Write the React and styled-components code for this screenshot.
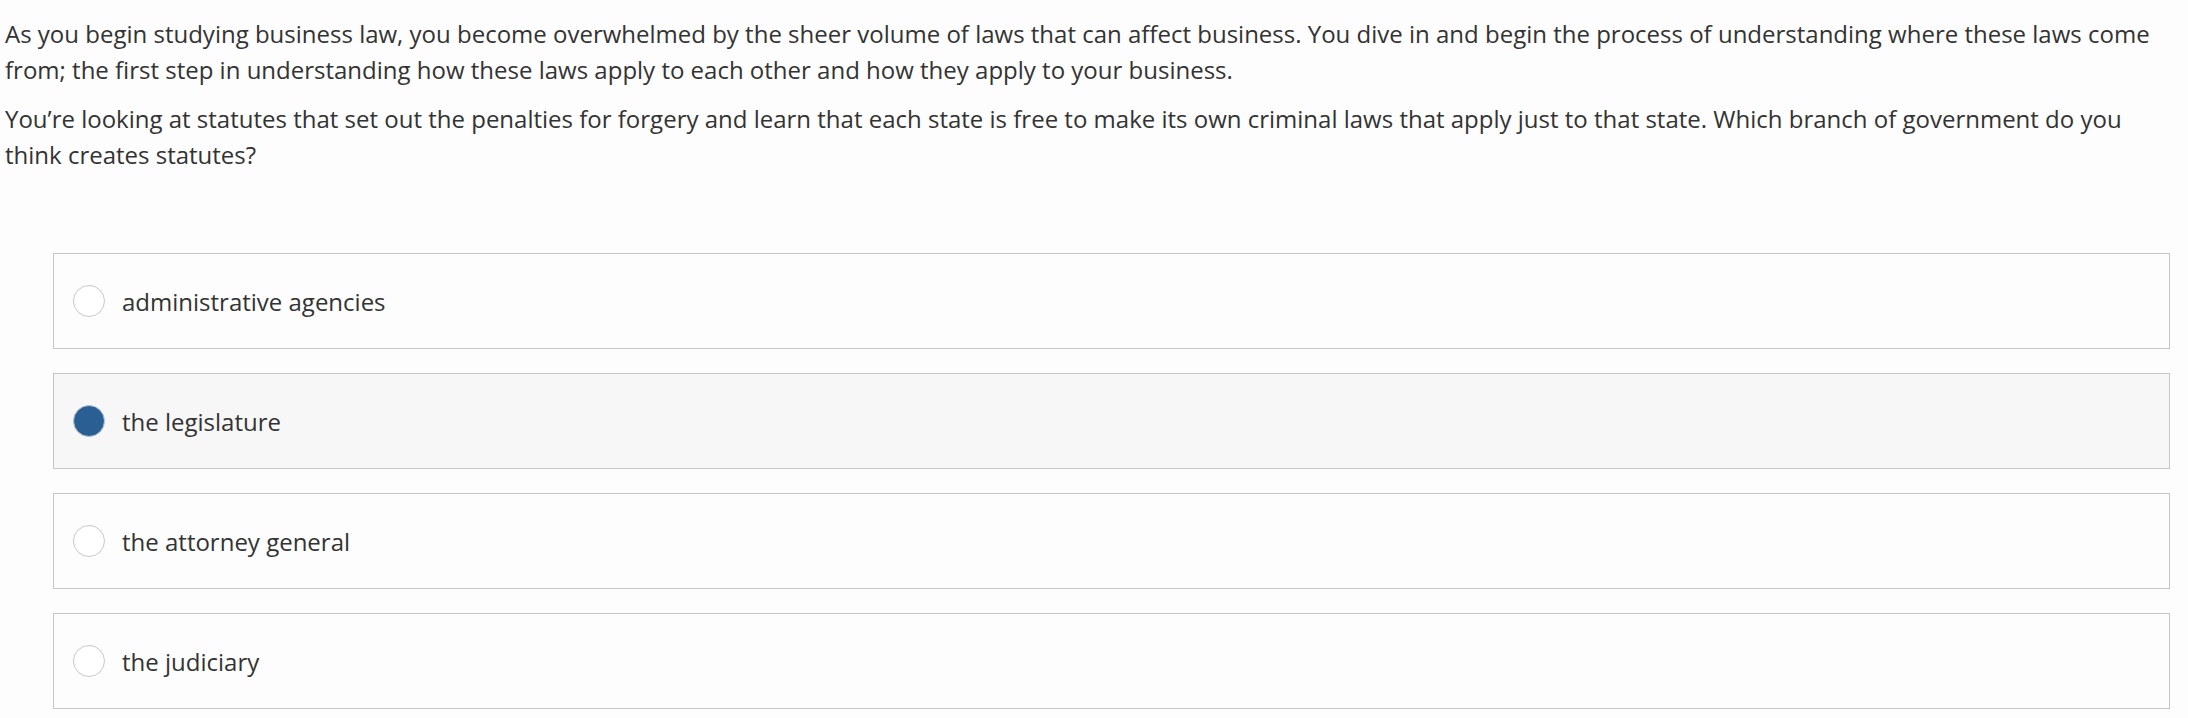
import React, { useState } from "react";
import styled, { createGlobalStyle } from "styled-components";

const Global = createGlobalStyle`
  html, body { margin: 0; padding: 0; background: #fdfdfd; }
  body { font-family: "Open Sans", "Noto Sans", sans-serif; color: #333; }
  * { box-sizing: border-box; }
`;

const Page = styled.div`
  padding: 16px 18px 0 5px;
`;

const Question = styled.div`
  font-size: 24px;
  line-height: 36px;
`;

const Para = styled.p`
  margin: 0 0 13px 0;
  &:last-child { margin-bottom: 0; }
`;

const Options = styled.div`
  margin: 80px 0 0 48px;
  display: flex;
  flex-direction: column;
  gap: 24px;
`;

const Option = styled.label`
  display: flex;
  align-items: center;
  height: 96px;
  padding: 0 19px;
  border: 1px solid #c6c6c6;
  background: ${(p) => (p.$selected ? "#f7f7f7" : "#fdfdfd")};
  cursor: pointer;
`;

const Radio = styled.span`
  flex: none;
  width: 32px;
  height: 32px;
  border-radius: 50%;
  border: 1px solid ${(p) => (p.$checked ? "#b9c6d3" : "#c9c9c9")};
  background: ${(p) => (p.$checked ? "#2a5f94" : "#ffffff")};
  margin-right: 17px;
`;

const Label = styled.span`
  font-size: 24px;
  color: #333;
`;

const choices = [
  "administrative agencies",
  "the legislature",
  "the attorney general",
  "the judiciary",
];

export default function App() {
  const [sel, setSel] = useState(1);
  return (
    <>
      <Global />
      <Page>
        <Question>
          <Para>
            As you begin studying business law, you become overwhelmed by the sheer volume of laws that can affect business. You dive in and begin the process of understanding where these laws come from; the first step in understanding how these laws apply to each other and how they apply to your business.
          </Para>
          <Para>
            You’re looking at statutes that set out the penalties for forgery and learn that each state is free to make its own criminal laws that apply just to that state. Which branch of government do you think creates statutes?
          </Para>
        </Question>
        <Options>
          {choices.map((c, i) => (
            <Option key={c} $selected={sel === i} onClick={() => setSel(i)}>
              <Radio $checked={sel === i} />
              <Label>{c}</Label>
            </Option>
          ))}
        </Options>
      </Page>
    </>
  );
}
